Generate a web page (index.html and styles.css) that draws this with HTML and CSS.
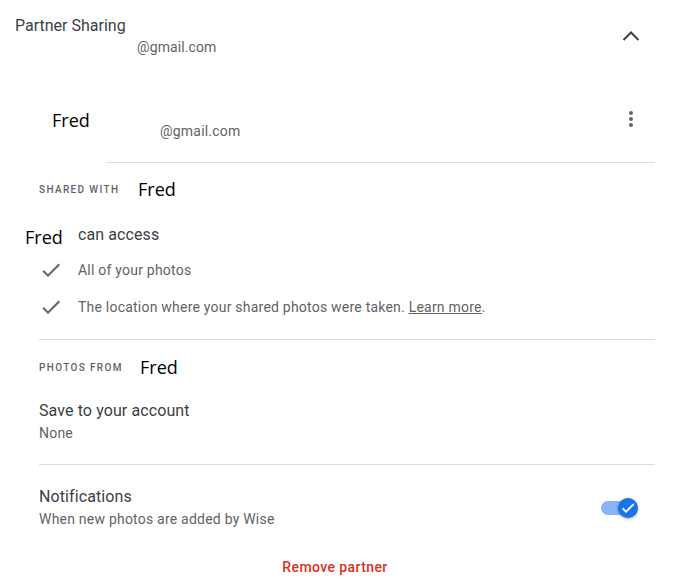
FILE: index.html
```html
<!DOCTYPE html>
<html lang="en">
<head>
<meta charset="utf-8">
<title>Partner Sharing</title>
<link rel="stylesheet" href="styles.css">
</head>
<body>
<div class="page">
  <header class="header">
    <div class="header-text">
      <div class="title">Partner Sharing</div>
      <div class="header-email">@gmail.com</div>
    </div>
    <svg class="chevron" width="18" height="12" viewBox="0 0 18 12" aria-hidden="true">
      <polyline points="1.5,10 9,2.5 16.5,10" fill="none" stroke="#3c4043" stroke-width="2"/>
    </svg>
  </header>

  <div class="partner-row">
    <span class="name partner-name">Fred</span>
    <span class="partner-email">@gmail.com</span>
    <svg class="kebab" width="4" height="16" viewBox="0 0 4 16" aria-hidden="true">
      <circle cx="2" cy="2" r="2" fill="#5f6368"/>
      <circle cx="2" cy="8" r="2" fill="#5f6368"/>
      <circle cx="2" cy="14" r="2" fill="#5f6368"/>
    </svg>
  </div>
  <div class="divider divider-partner"></div>

  <section class="section shared">
    <div class="label-row">
      <span class="label label-shared">SHARED WITH</span>
      <span class="name">Fred</span>
    </div>
    <div class="access-row">
      <span class="name access-name">Fred</span>
      <span class="primary">can access</span>
    </div>
    <ul class="checks">
      <li class="check-item">
        <svg class="check" width="24" height="24" viewBox="0 0 24 24" aria-hidden="true"><path d="M9 16.17L4.83 12l-1.42 1.41L9 19 21 7l-1.41-1.41z" fill="#5f6368"/></svg>
        <span class="secondary">All of your photos</span>
      </li>
      <li class="check-item">
        <svg class="check" width="24" height="24" viewBox="0 0 24 24" aria-hidden="true"><path d="M9 16.17L4.83 12l-1.42 1.41L9 19 21 7l-1.41-1.41z" fill="#5f6368"/></svg>
        <span class="secondary">The location where your shared photos were taken. <a class="link" href="#">Learn more</a>.</span>
      </li>
    </ul>
  </section>

  <div class="divider divider-section"></div>

  <section class="section photos">
    <div class="label-row">
      <span class="label label-photos">PHOTOS FROM</span>
      <span class="name">Fred</span>
    </div>
    <div class="setting save">
      <div class="primary">Save to your account</div>
      <div class="secondary sub">None</div>
    </div>
  </section>

  <div class="divider divider-section"></div>

  <section class="section notif">
    <div class="setting">
      <div class="primary">Notifications</div>
      <div class="secondary sub">When new photos are added by Wise</div>
    </div>
    <div class="toggle" role="switch" aria-checked="true">
      <span class="track"></span>
      <span class="thumb">
        <svg width="16" height="16" viewBox="0 0 24 24" aria-hidden="true"><path d="M9 16.17L4.83 12l-1.42 1.41L9 19 21 7l-1.41-1.41z" fill="#ffffff" stroke="#ffffff" stroke-width="1"/></svg>
      </span>
    </div>
  </section>

  <div class="footer">
    <a class="remove" href="#">Remove partner</a>
  </div>
</div>
</body>
</html>
```

FILE: styles.css
```css
html, body {
  margin: 0;
  padding: 0;
  background: #ffffff;
}

body {
  font-family: Roboto, "Liberation Sans", Arial, sans-serif;
  color: #3c4043;
}

.page {
  width: 685px;
}

.header {
  display: flex;
  align-items: flex-start;
  justify-content: space-between;
  padding: 16px 45px 0 15px;
}

.title {
  font-size: 16px;
  line-height: 20px;
  color: #3c4043;
}

.header-email {
  margin: 1px 0 0 122px;
  font-size: 14px;
  line-height: 20px;
  letter-spacing: 0.1px;
  color: #5f6368;
}

.chevron {
  display: block;
  margin-top: 14px;
}

.name {
  font-family: "Open Sans", "Noto Sans", sans-serif;
  font-size: 18px;
  line-height: 24px;
  color: #000000;
}

.partner-row {
  display: flex;
  align-items: flex-start;
  margin-top: 51px;
  padding: 0 52px 0 52px;
}

.partner-name {
  width: 108px;
  flex: none;
}

.partner-email {
  flex: 1;
  margin-top: 13px;
  font-size: 14px;
  line-height: 20px;
  letter-spacing: 0.2px;
  color: #5f6368;
}

.kebab {
  display: block;
  margin-top: 3px;
}

.divider {
  height: 1px;
  background: #dadce0;
}

.divider-partner {
  margin: 21px 30px 0 106px;
}

.divider-section {
  margin: 0 30px 0 39px;
}

.section {
  padding: 0 30px 0 39px;
}

.label-row {
  display: flex;
  align-items: center;
  height: 24px;
}

.label {
  font-size: 10px;
  font-weight: 500;
  letter-spacing: 1.35px;
  color: #5f6368;
}

.label-shared {
  width: 99px;
}

.label-photos {
  width: 101px;
}

.shared {
  padding-top: 14px;
  padding-bottom: 20px;
}

.access-row {
  display: flex;
  align-items: flex-start;
  margin: 24px 0 0 -14px;
}

.access-name {
  width: 53px;
}

.primary {
  font-size: 16px;
  line-height: 20px;
  letter-spacing: 0.1px;
  color: #3c4043;
}

.secondary {
  font-size: 14px;
  line-height: 20px;
  letter-spacing: 0.22px;
  color: #5f6368;
}

.checks {
  list-style: none;
  margin: 9px 0 0 0;
  padding: 0;
  display: flex;
  flex-direction: column;
  gap: 13px;
}

.check-item {
  display: flex;
  align-items: center;
  gap: 15px;
  height: 24px;
}

.check {
  display: block;
  flex: none;
}

.link {
  color: #5f6368;
  text-decoration: underline;
}

.photos {
  padding-top: 15px;
  padding-bottom: 21px;
}

.save {
  margin-top: 22px;
}

.sub {
  margin-top: 2px;
}

.notif {
  display: flex;
  align-items: center;
  justify-content: space-between;
  padding-top: 22px;
  padding-right: 47px;
}

.toggle {
  position: relative;
  width: 37px;
  height: 20px;
}

.track {
  position: absolute;
  left: 0;
  top: 3px;
  width: 34px;
  height: 14px;
  border-radius: 7px;
  background: #8ab4f8;
}

.thumb {
  position: absolute;
  right: 0;
  top: 0;
  width: 20px;
  height: 20px;
  border-radius: 50%;
  background: #1a73e8;
  box-shadow: 0 1px 3px rgba(0, 0, 0, 0.35);
  display: flex;
  align-items: center;
  justify-content: center;
}

.thumb svg {
  display: block;
}

.footer {
  margin-top: 28px;
  padding: 0 30px 0 15px;
  text-align: center;
}

.remove {
  font-size: 14px;
  line-height: 20px;
  font-weight: 500;
  letter-spacing: 0.4px;
  color: #d93025;
  text-decoration: none;
}
```
